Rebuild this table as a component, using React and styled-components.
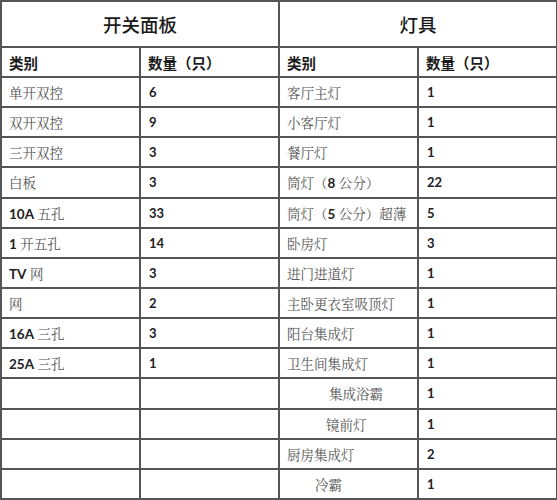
import React from 'react';
import styled, { createGlobalStyle } from 'styled-components';

const GlobalStyle = createGlobalStyle`
  html, body {
    margin: 0;
    padding: 0;
    background: #fff;
  }
`;

const Sheet = styled.table`
  width: 556px;
  border-collapse: collapse;
  table-layout: fixed;
  margin: 0;
  border: 2px solid #555;
`;

const Col = styled.col`
  width: ${(p) => p.w}px;
`;

const Row = styled.tr`
  height: ${(p) => p.h || 30.15}px;
`;

const TitleCell = styled.th`
  padding: 0;
  border: 2px solid #555;
  font-family: "Noto Sans CJK SC", sans-serif;
  font-size: 18.5px;
  font-weight: 500;
  color: #1a1a1a;
  text-align: center;
  vertical-align: middle;
`;

const HeadCell = styled.th`
  padding: 0 0 0 7px;
  border: 2px solid #555;
  font-family: "Lato", "Noto Sans CJK SC", sans-serif;
  font-size: 14.5px;
  font-weight: 700;
  color: #1a1a1a;
  text-align: left;
  vertical-align: middle;
`;

const NameCell = styled.td`
  padding: 0 0 0 ${(p) => p.indent || 7}px;
  border: 2px solid #555;
  font-family: "Noto Serif CJK SC", "Noto Sans CJK SC", serif;
  font-size: 13.5px;
  font-weight: 400;
  color: #555;
  white-space: nowrap;
  vertical-align: middle;

  b {
    font-family: "Lato", sans-serif;
    font-weight: 700;
    color: #222;
  }
`;

const CountCell = styled.td`
  padding: 0 0 0 8px;
  border: 2px solid #555;
  font-family: "Lato", sans-serif;
  font-size: 13px;
  font-weight: 700;
  color: #222;
  vertical-align: middle;
`;

const rows = [
  { a: '单开双控', an: '6', b: '客厅主灯', bn: '1' },
  { a: '双开双控', an: '9', b: '小客厅灯', bn: '1' },
  { a: '三开双控', an: '3', b: '餐厅灯', bn: '1' },
  { a: '白板', an: '3', b: <>筒灯（<b>8</b> 公分）</>, bn: '22' },
  { a: <><b>10A</b> 五孔</>, an: '33', b: <>筒灯（<b>5</b> 公分）超薄</>, bn: '5' },
  { a: <><b>1</b> 开五孔</>, an: '14', b: '卧房灯', bn: '3' },
  { a: <><b>TV</b> 网</>, an: '3', b: '进门进道灯', bn: '1' },
  { a: '网', an: '2', b: '主卧更衣室吸顶灯', bn: '1' },
  { a: <><b>16A</b> 三孔</>, an: '3', b: '阳台集成灯', bn: '1' },
  { a: <><b>25A</b> 三孔</>, an: '1', b: '卫生间集成灯', bn: '1' },
  { a: '', an: '', b: '集成浴霸', bn: '1', indent: 49 },
  { a: '', an: '', b: '镜前灯', bn: '1', indent: 46 },
  { a: '', an: '', b: '厨房集成灯', bn: '2' },
  { a: '', an: '', b: '冷霸', bn: '1', indent: 35 },
];

export default function App() {
  return (
    <>
      <GlobalStyle />
      <Sheet>
        <colgroup>
          <Col w={139} />
          <Col w={139} />
          <Col w={139} />
          <Col w={139} />
        </colgroup>
        <thead>
          <Row h={46}>
            <TitleCell colSpan={2}>开关面板</TitleCell>
            <TitleCell colSpan={2}>灯具</TitleCell>
          </Row>
          <Row h={30}>
            <HeadCell>类别</HeadCell>
            <HeadCell>数量（只）</HeadCell>
            <HeadCell>类别</HeadCell>
            <HeadCell>数量（只）</HeadCell>
          </Row>
        </thead>
        <tbody>
          {rows.map((r, i) => (
            <Row key={i}>
              <NameCell>{r.a}</NameCell>
              <CountCell>{r.an}</CountCell>
              <NameCell indent={r.indent}>{r.b}</NameCell>
              <CountCell>{r.bn}</CountCell>
            </Row>
          ))}
        </tbody>
      </Sheet>
    </>
  );
}
